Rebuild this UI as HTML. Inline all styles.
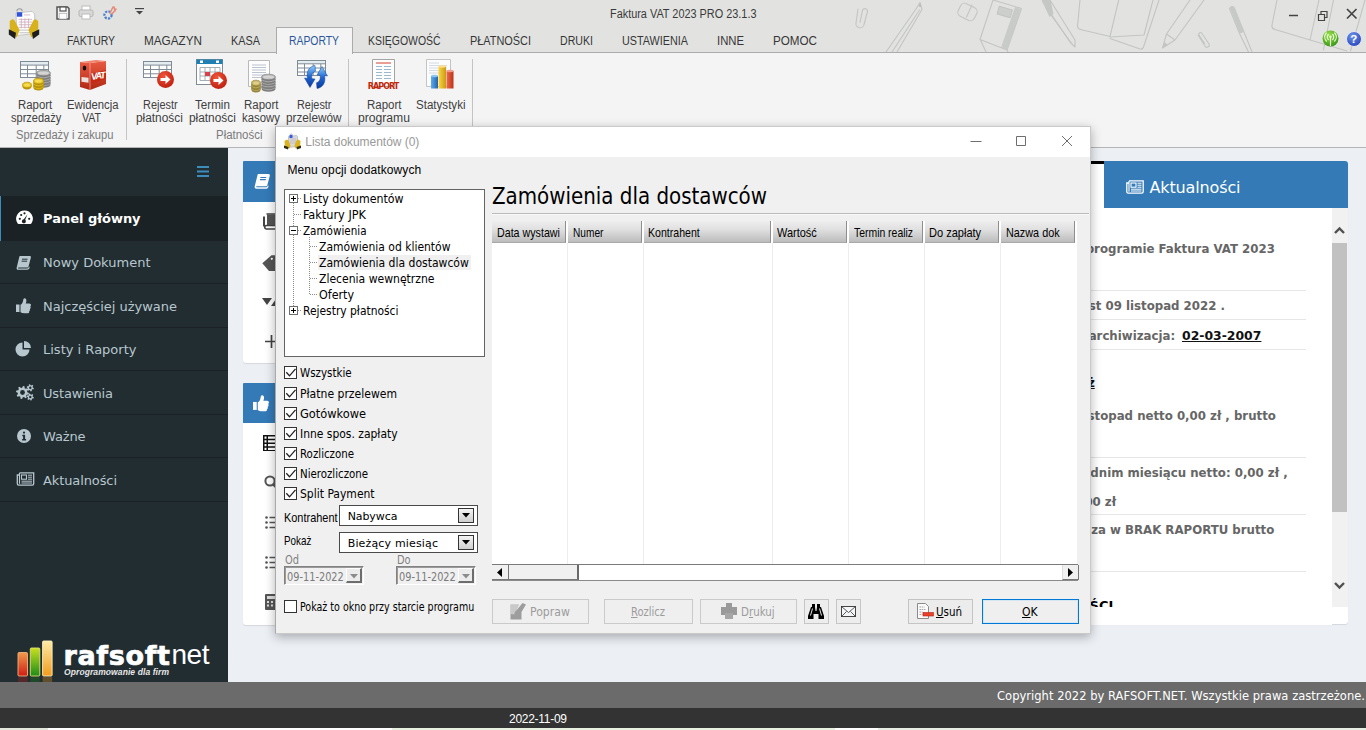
<!DOCTYPE html>
<html lang="pl">
<head>
<meta charset="utf-8">
<title>Faktura VAT 2023 PRO 23.1.3</title>
<style>
html,body{margin:0;padding:0}
body{width:1366px;height:730px;position:relative;overflow:hidden;background:#ecf0f5;font-family:"Liberation Sans",sans-serif}
div,svg{box-sizing:border-box}
svg{position:absolute;overflow:visible}
#titlebar{position:absolute;left:0;top:0;width:1366px;height:53px;background:#e2e3e1;border-bottom:1px solid #ababab;overflow:hidden}
#ribbon{position:absolute;left:0;top:53px;width:1366px;height:95px;background:#f4f4f5;border-bottom:1px solid #b5b5b5}
#sidebar{position:absolute;left:0;top:148px;width:228px;height:534px;background:#222d32;overflow:hidden}
#content{position:absolute;left:228px;top:148px;width:1138px;height:534px;background:#ecf0f5;overflow:hidden}
#footer{position:absolute;left:0;top:682px;width:1366px;height:26px;background:#6b6b6b}
#status{position:absolute;left:0;top:708px;width:1366px;height:19.5px;background:#333}
#strip{position:absolute;left:0;top:727.5px;width:1366px;height:3px;background:linear-gradient(90deg,#e3e6da 48px,#fff 48px,#fff 392px,#e8f0e0 392px,#e8f0e0 835px,#fff 835px,#fff 878px,#e8eee4 878px)}
#dialog{position:absolute;left:275px;top:126px;width:816px;height:508px;background:#f0f0f0;border:1px solid #c9c9c9;border-left-color:#a9a9a9;box-shadow:0 3px 10px rgba(0,0,0,.3)}
</style>
</head>
<body>
<div id="titlebar">
<svg style="left:0px;top:0px;" width="1366" height="52" viewBox="0 0 1366 52"><g fill="none" stroke="#c3c5c3" stroke-width="1.100" stroke-linecap="round" stroke-linejoin="round">
<path d="M858 9l-2 14a4 4 0 0 0 8 1.500l3.500-13a2.600 2.600 0 0 0-5-1.200l-2.500 12"/>
<path d="M916 9L886 52M919.500 10L892 52M922 9.500L897 52M916 9l4-6.500 2 7"/>
<rect x="958.500" y="5" width="18" height="14" rx="4.500" transform="rotate(27 967.500 12)"/><path d="M972 5l-5.500 12"/>
<path d="M993 0l28.500 8.500L1007 50l-27-10.500zM980.500 40l5.500 12M1007 50l1 2"/>
<rect x="998" y="8" width="13.500" height="8" transform="rotate(16 1005 12)" fill="#cdcfcd"/>
<path d="M1043 2l27 40 5 5 0-7L1050 0"/><path d="M1046 8l26 36"/>
<path d="M1080 0l-2.500 26c0 2 1 3 3 3.500l29.500 7M1118.700 0L1110 36.500M1110 37l34-2 9-35M1110 38.500l30 10.500c2 .5 3-.5 3.500-2L1159 0"/>
<path d="M1190 0l-23.500 34-4 14 12.500-8L1204 0M1166.500 34l8.500 6"/>
<path d="M1198 35l7 11a2 2 0 0 0 4-2l-7-10.500a1.500 1.500 0 0 0-3 1.500l5.500 8.500"/>
<path d="M1229.500 8.500c1-2 3.500-2.500 4.500-.5l10 24 8 20M1229.500 8.500l10 25 9 18.500"/>
<path d="M1277 0l-5 25c-.5 2.500 1 4 3 4.500L1347 51M1319 0l-9 40M1333.500 0L1323.500 50M1365 0l-14.500 51"/>
</g>
<path d="M1015 7l6 2-14 41-6-2.500z" fill="#c9cbc9"/><path d="M1041.500 0h9l3 14-4 3z" fill="#c5c7c5"/><path d="M1230 8c1-2.500 4-2.500 5 0l9 24-4 1.500z" fill="#c7c9c7"/><path d="M920 3l1.300 4-2.800-.5z" fill="#bbb"/><path d="M1162.500 48l2-6 3.500 3z" fill="#c3c5c3"/></svg>
<div style="position:absolute;left:609.5px;top:6.15px;font:normal 12px 'Liberation Sans',sans-serif;line-height:16px;color:#3a3a3a;white-space:pre;transform:scaleX(0.9076);transform-origin:0 50%;">Faktura VAT 2023 PRO 23.1.3</div>
<div style="position:absolute;left:67.0px;top:32.85px;font:normal 12px 'Liberation Sans',sans-serif;line-height:16px;color:#363636;white-space:pre;transform:scaleX(0.8707);transform-origin:0 50%;">FAKTURY</div>
<div style="position:absolute;left:144.0px;top:32.85px;font:normal 12px 'Liberation Sans',sans-serif;line-height:16px;color:#363636;white-space:pre;transform:scaleX(0.9774);transform-origin:0 50%;">MAGAZYN</div>
<div style="position:absolute;left:231.0px;top:32.85px;font:normal 12px 'Liberation Sans',sans-serif;line-height:16px;color:#363636;white-space:pre;transform:scaleX(0.9058);transform-origin:0 50%;">KASA</div>
<div style="position:absolute;left:368.0px;top:32.85px;font:normal 12px 'Liberation Sans',sans-serif;line-height:16px;color:#363636;white-space:pre;transform:scaleX(0.8699);transform-origin:0 50%;">KSIĘGOWOŚĆ</div>
<div style="position:absolute;left:470.0px;top:32.85px;font:normal 12px 'Liberation Sans',sans-serif;line-height:16px;color:#363636;white-space:pre;transform:scaleX(0.9088);transform-origin:0 50%;">PŁATNOŚCI</div>
<div style="position:absolute;left:560.0px;top:32.85px;font:normal 12px 'Liberation Sans',sans-serif;line-height:16px;color:#363636;white-space:pre;transform:scaleX(0.8837);transform-origin:0 50%;">DRUKI</div>
<div style="position:absolute;left:622.0px;top:32.85px;font:normal 12px 'Liberation Sans',sans-serif;line-height:16px;color:#363636;white-space:pre;transform:scaleX(0.8999);transform-origin:0 50%;">USTAWIENIA</div>
<div style="position:absolute;left:717.0px;top:32.85px;font:normal 12px 'Liberation Sans',sans-serif;line-height:16px;color:#363636;white-space:pre;transform:scaleX(0.9417);transform-origin:0 50%;">INNE</div>
<div style="position:absolute;left:773.0px;top:32.85px;font:normal 12px 'Liberation Sans',sans-serif;line-height:16px;color:#363636;white-space:pre;transform:scaleX(0.9704);transform-origin:0 50%;">POMOC</div>
<svg style="left:56px;top:6px;" width="14" height="14" viewBox="0 0 14 14"><path d="M1 1h10.500l1.500 1.500V13H1z" fill="#f2f2f2" stroke="#555" stroke-width="1.500"/><rect x="4" y="1" width="6" height="4" fill="#fff" stroke="#555" stroke-width="1.200"/><rect x="3.200" y="7.500" width="7.600" height="5.500" fill="#fdfdfd" stroke="#aaa" stroke-width=".6"/></svg>
<svg style="left:78px;top:5px;" width="16" height="15" viewBox="0 0 16 15"><rect x="4" y="1" width="8" height="5" fill="#fff" stroke="#bbb"/><rect x="1" y="5" width="14" height="6.500" rx="1.500" fill="#d9d9d9" stroke="#b5b5b5"/><rect x="4" y="9" width="8" height="5" fill="#fff" stroke="#bbb"/></svg>
<svg style="left:102px;top:4px;" width="16" height="17" viewBox="0 0 16 17"><circle cx="6" cy="11" r="3.600" fill="none" stroke="#4a7fd0" stroke-width="2.200" stroke-dasharray="2.200 1.200"/><path d="M8 9l3-6M10 10l4-5M12 3l1 4" stroke="#e88a7a" stroke-width="1.600" stroke-linecap="round"/></svg>
<svg style="left:135px;top:8px;" width="9" height="7" viewBox="0 0 9 7"><path d="M0 .6h9" stroke="#444" stroke-width="1.200"/><path d="M1 3h7L4.500 6.500z" fill="#444"/></svg>
<svg style="left:7.5px;top:6px;" width="32" height="33" viewBox="0 0 34 37"><path d="M9 6a3 3 0 0 1 6 0" fill="none" stroke="#9a9a9a" stroke-width="1.200"/>
<path d="M8 8l18-2 3 3v22l-20 2z" fill="#fdfdfd" stroke="#b5b5b5" stroke-width=".8"/>
<rect x="9" y="7" width="6" height="5" fill="#2f54d9"/>
<path d="M17 10h7M11 15h15M11 18h15M11 21h15M11 24h15M14 14v11M18 14v11M22 14v11" stroke="#c9a2b6" stroke-width=".8"/>
<path d="M11 27h14M12 30h12" stroke="#bbb" stroke-width="1"/>
<path d="M1 17c2-3 5-3 6 0l5 10-3 8-7-3-1-8z" fill="#d8b21c"/><path d="M33 17c-2-3-5-3-6 0l-5 10 3 8 7-3 1-8z" fill="#d8b21c"/>
<path d="M0 26l8 4-1 7-7-5z" fill="#1e1e1e"/><path d="M34 26l-8 4 1 7 7-5z" fill="#1e1e1e"/></svg>
<svg style="left:1288px;top:10px;" width="70" height="12" viewBox="0 0 70 12"><g stroke="#444" stroke-width="1.500" fill="none"><path d="M1 5.500h9"/><path d="M30.500 4.500h6v6h-6zM33 4V1.500h6v6h-2.500" stroke-width="1.200"/><path d="M59 -1l9.500 9.500M68.500 -1L59 8.500" stroke-width="1.700"/></g></svg>
<svg style="left:1322px;top:30px;" width="17" height="17" viewBox="0 0 17 17"><defs><radialGradient id="gg" cx=".4" cy=".3" r=".8"><stop offset="0" stop-color="#9be04a"/><stop offset="1" stop-color="#2f8f12"/></radialGradient></defs><circle cx="8.500" cy="8.500" r="8" fill="url(#gg)"/><path d="M8.500 7v8.500M6.300 4.500a3.500 3.500 0 0 0 0 5M10.700 4.500a3.500 3.500 0 0 1 0 5M4.300 3a6 6 0 0 0 0 8M12.700 3a6 6 0 0 1 0 8" stroke="#eaffd8" stroke-width="1.200" fill="none" stroke-linecap="round"/><circle cx="8.500" cy="6.800" r="1.200" fill="#eaffd8"/></svg>
<svg style="left:1346px;top:31px;" width="16" height="16" viewBox="0 0 16 16"><defs><radialGradient id="bg" cx=".4" cy=".3" r=".8"><stop offset="0" stop-color="#6f93ea"/><stop offset="1" stop-color="#1f3fb5"/></radialGradient></defs><circle cx="8" cy="8" r="7.500" fill="url(#bg)" stroke="#e4e9f8" stroke-width="1"/></svg>
<div style="position:absolute;left:1350.3px;top:31.02px;font:bold 11.5px 'Liberation Sans',sans-serif;line-height:16px;color:#fff;white-space:pre;">?</div>
</div>
<div id="ribbon">
<div style="position:absolute;left:276px;top:-26px;width:77px;height:27px;background:#f4f4f5;border:1px solid #ababab;border-bottom:none"></div>
<div style="position:absolute;left:289.0px;top:-20.15px;font:normal 12px 'Liberation Sans',sans-serif;line-height:16px;color:#2b579a;white-space:pre;transform:scaleX(0.8651);transform-origin:0 50%;">RAPORTY</div>
<div style="position:absolute;left:18.4px;top:43.85px;font:normal 12px 'Liberation Sans',sans-serif;line-height:16px;color:#404040;white-space:pre;transform:scaleX(0.9492);transform-origin:0 50%;">Raport</div>
<div style="position:absolute;left:10.5px;top:56.85px;font:normal 12px 'Liberation Sans',sans-serif;line-height:16px;color:#404040;white-space:pre;transform:scaleX(0.9177);transform-origin:0 50%;">sprzedaży</div>
<div style="position:absolute;left:66.8px;top:43.85px;font:normal 12px 'Liberation Sans',sans-serif;line-height:16px;color:#404040;white-space:pre;transform:scaleX(0.9414);transform-origin:0 50%;">Ewidencja</div>
<div style="position:absolute;left:82.1px;top:56.85px;font:normal 12px 'Liberation Sans',sans-serif;line-height:16px;color:#404040;white-space:pre;transform:scaleX(0.8858);transform-origin:0 50%;">VAT</div>
<div style="position:absolute;left:142.5px;top:43.85px;font:normal 12px 'Liberation Sans',sans-serif;line-height:16px;color:#404040;white-space:pre;transform:scaleX(0.9102);transform-origin:0 50%;">Rejestr</div>
<div style="position:absolute;left:135.9px;top:56.85px;font:normal 12px 'Liberation Sans',sans-serif;line-height:16px;color:#404040;white-space:pre;transform:scaleX(0.9879);transform-origin:0 50%;">płatności</div>
<div style="position:absolute;left:194.8px;top:43.85px;font:normal 12px 'Liberation Sans',sans-serif;line-height:16px;color:#404040;white-space:pre;transform:scaleX(0.9690);transform-origin:0 50%;">Termin</div>
<div style="position:absolute;left:188.6px;top:56.85px;font:normal 12px 'Liberation Sans',sans-serif;line-height:16px;color:#404040;white-space:pre;transform:scaleX(0.9879);transform-origin:0 50%;">płatności</div>
<div style="position:absolute;left:243.7px;top:43.85px;font:normal 12px 'Liberation Sans',sans-serif;line-height:16px;color:#404040;white-space:pre;transform:scaleX(0.9575);transform-origin:0 50%;">Raport</div>
<div style="position:absolute;left:241.6px;top:56.85px;font:normal 12px 'Liberation Sans',sans-serif;line-height:16px;color:#404040;white-space:pre;transform:scaleX(0.9471);transform-origin:0 50%;">kasowy</div>
<div style="position:absolute;left:296.5px;top:43.85px;font:normal 12px 'Liberation Sans',sans-serif;line-height:16px;color:#404040;white-space:pre;transform:scaleX(0.9075);transform-origin:0 50%;">Rejestr</div>
<div style="position:absolute;left:285.5px;top:56.85px;font:normal 12px 'Liberation Sans',sans-serif;line-height:16px;color:#404040;white-space:pre;transform:scaleX(0.9788);transform-origin:0 50%;">przelewów</div>
<div style="position:absolute;left:366.5px;top:43.85px;font:normal 12px 'Liberation Sans',sans-serif;line-height:16px;color:#404040;white-space:pre;transform:scaleX(0.9575);transform-origin:0 50%;">Raport</div>
<div style="position:absolute;left:358.0px;top:56.85px;font:normal 12px 'Liberation Sans',sans-serif;line-height:16px;color:#404040;white-space:pre;transform:scaleX(1.0125);transform-origin:0 50%;">programu</div>
<div style="position:absolute;left:415.5px;top:43.85px;font:normal 12px 'Liberation Sans',sans-serif;line-height:16px;color:#404040;white-space:pre;transform:scaleX(0.9638);transform-origin:0 50%;">Statystyki</div>
<div style="position:absolute;left:15.5px;top:73.85px;font:normal 12px 'Liberation Sans',sans-serif;line-height:16px;color:#7a7a7a;white-space:pre;transform:scaleX(0.9309);transform-origin:0 50%;">Sprzedaży i zakupu</div>
<div style="position:absolute;left:215.9px;top:73.85px;font:normal 12px 'Liberation Sans',sans-serif;line-height:16px;color:#7a7a7a;white-space:pre;transform:scaleX(0.9548);transform-origin:0 50%;">Płatności</div>
<div style="position:absolute;left:126px;top:6px;width:1px;height:81px;background:#c4c4c4"></div>
<div style="position:absolute;left:348px;top:6px;width:1px;height:81px;background:#c4c4c4"></div>
<div style="position:absolute;left:472px;top:6px;width:1px;height:81px;background:#c4c4c4"></div>
<svg style="left:20px;top:7.5px;" width="29" height="17" viewBox="0 0 29 17"><rect x=".5" y=".5" width="28" height="16" fill="#fff" stroke="#7f8c95"/><rect x="1" y="1" width="27" height="3.1" fill="#e4ecf0"/><path d="M0 4.1h29" stroke="#7f8c95" stroke-width="1"/><path d="M0 8.5h29" stroke="#7f8c95" stroke-width="1"/><path d="M0 12.8h29" stroke="#7f8c95" stroke-width="1"/><path d="M7.5 4.1v12.9" stroke="#7f8c95" stroke-width="1"/><path d="M16.2 4.1v12.9" stroke="#7f8c95" stroke-width="1"/><path d="M23.8 4.1v12.9" stroke="#7f8c95" stroke-width="1"/></svg>
<svg style="left:35.5px;top:17px;" width="15" height="19.0" viewBox="0 0 15 19.0"><ellipse cx="7.5" cy="15.0" rx="7" ry="2.800" fill="#7e7e7e"/><ellipse cx="7.5" cy="13.4" rx="7" ry="2.800" fill="#b9b9b9" stroke="#7e7e7e" stroke-width=".7"/><ellipse cx="7.5" cy="12.4" rx="7" ry="2.800" fill="#7e7e7e"/><ellipse cx="7.5" cy="10.8" rx="7" ry="2.800" fill="#b9b9b9" stroke="#7e7e7e" stroke-width=".7"/><ellipse cx="7.5" cy="9.8" rx="7" ry="2.800" fill="#7e7e7e"/><ellipse cx="7.5" cy="8.2" rx="7" ry="2.800" fill="#b9b9b9" stroke="#7e7e7e" stroke-width=".7"/><ellipse cx="7.5" cy="7.2" rx="7" ry="2.800" fill="#7e7e7e"/><ellipse cx="7.5" cy="5.6" rx="7" ry="2.800" fill="#b9b9b9" stroke="#7e7e7e" stroke-width=".7"/><ellipse cx="7.5" cy="4.6" rx="7" ry="2.800" fill="#7e7e7e"/><ellipse cx="7.5" cy="3.0" rx="7" ry="2.800" fill="#b9b9b9" stroke="#7e7e7e" stroke-width=".7"/><ellipse cx="7.5" cy="3" rx="5.5" ry="1.600" fill="#d4d4d4"/></svg>
<svg style="left:33px;top:24.5px;" width="11" height="13.8" viewBox="0 0 11 13.8"><ellipse cx="5.5" cy="9.8" rx="5" ry="2.800" fill="#b8930c"/><ellipse cx="5.5" cy="8.2" rx="5" ry="2.800" fill="#e9c51f" stroke="#b8930c" stroke-width=".7"/><ellipse cx="5.5" cy="7.2" rx="5" ry="2.800" fill="#b8930c"/><ellipse cx="5.5" cy="5.6" rx="5" ry="2.800" fill="#e9c51f" stroke="#b8930c" stroke-width=".7"/><ellipse cx="5.5" cy="4.6" rx="5" ry="2.800" fill="#b8930c"/><ellipse cx="5.5" cy="3.0" rx="5" ry="2.800" fill="#e9c51f" stroke="#b8930c" stroke-width=".7"/><ellipse cx="5.5" cy="3" rx="3.5" ry="1.600" fill="#f6dc55"/></svg>
<svg style="left:21.5px;top:29px;" width="10.0" height="8.6" viewBox="0 0 10.0 8.6"><ellipse cx="5.0" cy="4.6" rx="4.5" ry="2.800" fill="#b8930c"/><ellipse cx="5.0" cy="3.0" rx="4.5" ry="2.800" fill="#e9c51f" stroke="#b8930c" stroke-width=".7"/><ellipse cx="5.0" cy="3" rx="3.0" ry="1.600" fill="#f6dc55"/></svg>
<svg style="left:79px;top:7px;" width="30" height="31" viewBox="0 0 30 31"><defs><linearGradient id="bd" x1="0" y1="0" x2="0" y2="1"><stop offset="0" stop-color="#ea5a42"/><stop offset="1" stop-color="#b02812"/></linearGradient></defs><path d="M1 2l10 1v27L1 27z" fill="url(#bd)"/><path d="M11 3l16-2v23l-16 6z" fill="url(#bd)"/><path d="M11 14l16-4v9l-16 5z" fill="#c42a14"/><path d="M1 2L17 0l10 1-16 2z" fill="#f0826e"/>
<ellipse cx="5.500" cy="8" rx="1.800" ry="2.500" fill="#111"/><path d="M2.500 17l7 .8v5l-7-1z" fill="#e8e0dc"/><path d="M11 3v27" stroke="#f7b3a6" stroke-width=".7"/></svg>
<div style="position:absolute;left:90.5px;top:14.71px;font:bold 9.5px 'Liberation Sans',sans-serif;line-height:16px;color:#fff;white-space:pre;letter-spacing:-1.297px;transform:rotate(-8deg);font-style:italic;">VAT</div>
<svg style="left:143px;top:8px;" width="29" height="17" viewBox="0 0 29 17"><rect x=".5" y=".5" width="28" height="16" fill="#fff" stroke="#7f8c95"/><rect x="1" y="1" width="27" height="3.1" fill="#e4ecf0"/><path d="M0 4.1h29" stroke="#7f8c95" stroke-width="1"/><path d="M0 8.5h29" stroke="#7f8c95" stroke-width="1"/><path d="M0 12.8h29" stroke="#7f8c95" stroke-width="1"/><path d="M7.5 4.1v12.9" stroke="#7f8c95" stroke-width="1"/><path d="M16.2 4.1v12.9" stroke="#7f8c95" stroke-width="1"/><path d="M23.8 4.1v12.9" stroke="#7f8c95" stroke-width="1"/></svg>
<svg style="left:156.5px;top:18.0px;" width="17.0" height="17.0" viewBox="0 0 17.0 17.0"><defs><radialGradient id="ra165" cx=".4" cy=".3" r=".8"><stop offset="0" stop-color="#f0543a"/><stop offset="1" stop-color="#b81a0a"/></radialGradient></defs><circle cx="8.5" cy="8.5" r="8.5" fill="url(#ra165)"/><path d="M3.5 7.1h5v-3l5 4.400-5 4.400v-3h-5z" fill="#fff"/></svg>
<svg style="left:196px;top:6px;" width="27" height="26" viewBox="0 0 27 26"><rect x=".5" y=".5" width="26" height="25" fill="#fff" stroke="#7f8c95"/><rect x=".5" y=".5" width="26" height="4.500" fill="#1e7fb4"/>
<rect x="4" y="1.500" width="3" height="2.500" fill="#fff"/><rect x="20" y="1.500" width="3" height="2.500" fill="#fff"/>
<path d="M4 8.500h20v13H4zM4 13h20M4 17h20M9 8.500v13M14 8.500v13M19 8.500v13" fill="none" stroke="#9aa7b0" stroke-width=".9"/><rect x="9" y="13" width="5" height="4" fill="#d9404c"/></svg>
<svg style="left:209.5px;top:19.0px;" width="17.0" height="17.0" viewBox="0 0 17.0 17.0"><defs><radialGradient id="ra218" cx=".4" cy=".3" r=".8"><stop offset="0" stop-color="#f0543a"/><stop offset="1" stop-color="#b81a0a"/></radialGradient></defs><circle cx="8.5" cy="8.5" r="8.5" fill="url(#ra218)"/><path d="M3.5 7.1h5v-3l5 4.400-5 4.400v-3h-5z" fill="#fff"/></svg>
<svg style="left:248px;top:7px;" width="23" height="27" viewBox="0 0 23 27"><path d="M.5 .5h21v26H.5z" fill="#fdfdfd" stroke="#b9b9b9"/><path d="M4 5h14M4 7.500h14M4 10h14M4 12.500h14M4 15h14M4 17.500h14" stroke="#a9b4c2" stroke-width=".8"/></svg>
<svg style="left:260.5px;top:21px;" width="15" height="19.0" viewBox="0 0 15 19.0"><ellipse cx="7.5" cy="15.0" rx="7" ry="2.800" fill="#7e7e7e"/><ellipse cx="7.5" cy="13.4" rx="7" ry="2.800" fill="#b9b9b9" stroke="#7e7e7e" stroke-width=".7"/><ellipse cx="7.5" cy="12.4" rx="7" ry="2.800" fill="#7e7e7e"/><ellipse cx="7.5" cy="10.8" rx="7" ry="2.800" fill="#b9b9b9" stroke="#7e7e7e" stroke-width=".7"/><ellipse cx="7.5" cy="9.8" rx="7" ry="2.800" fill="#7e7e7e"/><ellipse cx="7.5" cy="8.2" rx="7" ry="2.800" fill="#b9b9b9" stroke="#7e7e7e" stroke-width=".7"/><ellipse cx="7.5" cy="7.2" rx="7" ry="2.800" fill="#7e7e7e"/><ellipse cx="7.5" cy="5.6" rx="7" ry="2.800" fill="#b9b9b9" stroke="#7e7e7e" stroke-width=".7"/><ellipse cx="7.5" cy="4.6" rx="7" ry="2.800" fill="#7e7e7e"/><ellipse cx="7.5" cy="3.0" rx="7" ry="2.800" fill="#b9b9b9" stroke="#7e7e7e" stroke-width=".7"/><ellipse cx="7.5" cy="3" rx="5.5" ry="1.600" fill="#d4d4d4"/></svg>
<svg style="left:251px;top:27px;" width="10.0" height="13.8" viewBox="0 0 10.0 13.8"><ellipse cx="5.0" cy="9.8" rx="4.5" ry="2.800" fill="#96853c"/><ellipse cx="5.0" cy="8.2" rx="4.5" ry="2.800" fill="#c9b565" stroke="#96853c" stroke-width=".7"/><ellipse cx="5.0" cy="7.2" rx="4.5" ry="2.800" fill="#96853c"/><ellipse cx="5.0" cy="5.6" rx="4.5" ry="2.800" fill="#c9b565" stroke="#96853c" stroke-width=".7"/><ellipse cx="5.0" cy="4.6" rx="4.5" ry="2.800" fill="#96853c"/><ellipse cx="5.0" cy="3.0" rx="4.5" ry="2.800" fill="#c9b565" stroke="#96853c" stroke-width=".7"/><ellipse cx="5.0" cy="3" rx="3.0" ry="1.600" fill="#ddcf8e"/></svg>
<svg style="left:297px;top:6.5px;" width="29" height="16" viewBox="0 0 29 16"><rect x=".5" y=".5" width="28" height="15" fill="#fff" stroke="#7f8c95"/><rect x="1" y="1" width="27" height="2.8" fill="#e4ecf0"/><path d="M0 3.8h29" stroke="#7f8c95" stroke-width="1"/><path d="M0 8.0h29" stroke="#7f8c95" stroke-width="1"/><path d="M0 12.0h29" stroke="#7f8c95" stroke-width="1"/><path d="M7.5 3.8v12.2" stroke="#7f8c95" stroke-width="1"/><path d="M16.2 3.8v12.2" stroke="#7f8c95" stroke-width="1"/><path d="M23.8 3.8v12.2" stroke="#7f8c95" stroke-width="1"/></svg>
<svg style="left:304px;top:11px;" width="24" height="25" viewBox="0 0 24 25"><defs><linearGradient id="bl" x1="0" y1="0" x2="0" y2="1"><stop offset="0" stop-color="#8fd0ff"/><stop offset=".5" stop-color="#1f66d0"/><stop offset="1" stop-color="#0a3a9a"/></linearGradient></defs>
<path d="M13 24.500c6-1 9-6 7.500-13l3 .5-5.500-9.500-5 8.500 3 .3c1 3.500-.5 6.500-3.500 7.500z" fill="url(#bl)" stroke="#123f96" stroke-width=".5"/>
<path d="M11 1.500c-6 1-9 6-7.500 13l-3-.5 5.500 9.500 5-8.500-3-.3c-1-3.500 .5-6.500 3.500-7.500z" fill="url(#bl)" stroke="#123f96" stroke-width=".5"/></svg>
<svg style="left:372px;top:6px;" width="23" height="28" viewBox="0 0 23 28"><path d="M.5 .5h22v27H.5z" fill="#fdfdfd" stroke="#a4a4a4"/><path d="M4 4h15" stroke="#d8402a" stroke-width="1"/><path d="M4 7.500h6M12 7.500h7M4 10.500h6M12 10.500h7M4 13.500h6M12 13.500h7M4 16.500h6M12 16.500h7M4 19.500h6M12 19.500h7" stroke="#8fb0c9" stroke-width=".9"/></svg>
<div style="position:absolute;left:367.8px;top:26.23px;font:bold 8px 'DejaVu Sans',sans-serif;line-height:16px;color:#c2280a;white-space:pre;letter-spacing:-0.956px;">RAPORT</div>
<svg style="left:426px;top:6px;" width="30" height="31" viewBox="0 0 30 31"><defs><linearGradient id="b1" x1="0" x2="1"><stop offset="0" stop-color="#5aaef0"/><stop offset="1" stop-color="#2a62a8"/></linearGradient><linearGradient id="b2" x1="0" x2="1"><stop offset="0" stop-color="#fbd648"/><stop offset="1" stop-color="#c99a10"/></linearGradient><linearGradient id="b3" x1="0" x2="1"><stop offset="0" stop-color="#f06a48"/><stop offset="1" stop-color="#b8341a"/></linearGradient></defs>
<path d="M.5 .5h24v27H.5z" fill="#fcfcfc" stroke="#bdbdbd" stroke-width=".9"/><path d="M3 4h10M3 6.500h18M3 9h18M3 11.500h18M3 14h18" stroke="#c9d2da" stroke-width=".8"/>
<rect x="5" y="17" width="7" height="12.500" fill="url(#b1)"/><rect x="12.500" y="7.500" width="7.500" height="22" fill="url(#b2)"/><rect x="20.500" y="12" width="7" height="17.500" fill="url(#b3)"/>
<ellipse cx="8.500" cy="17" rx="3.500" ry="1.200" fill="#8cc6f4"/><ellipse cx="16.200" cy="7.500" rx="3.700" ry="1.200" fill="#fbe08c"/><ellipse cx="24" cy="12" rx="3.500" ry="1.200" fill="#f59a8c"/></svg>
</div>
<div id="sidebar">
<svg style="left:197px;top:18px;" width="12" height="11" viewBox="0 0 12 11"><path d="M0 1h12M0 5.500h12M0 10h12" stroke="#3c8dbc" stroke-width="2"/></svg>
<div style="position:absolute;left:0px;top:48px;width:228px;height:45px;background:#1a2226;border-left:1px solid #3c8dbc"></div>
<div style="position:absolute;left:43.0px;top:63.30px;font:bold 13px 'DejaVu Sans',sans-serif;line-height:16px;color:#fff;white-space:pre;letter-spacing:-0.019px;">Panel główny</div>
<div style="position:absolute;left:43.0px;top:106.90px;font:normal 13px 'DejaVu Sans',sans-serif;line-height:16px;color:#b8c7ce;white-space:pre;letter-spacing:0.003px;">Nowy Dokument</div>
<div style="position:absolute;left:0px;top:135.0px;width:228px;height:1px;background:#1a2226"></div>
<div style="position:absolute;left:43.0px;top:150.60px;font:normal 13px 'DejaVu Sans',sans-serif;line-height:16px;color:#b8c7ce;white-space:pre;letter-spacing:-0.008px;">Najczęściej używane</div>
<div style="position:absolute;left:0px;top:178.7px;width:228px;height:1px;background:#1a2226"></div>
<div style="position:absolute;left:43.0px;top:194.30px;font:normal 13px 'DejaVu Sans',sans-serif;line-height:16px;color:#b8c7ce;white-space:pre;letter-spacing:0.010px;">Listy i Raporty</div>
<div style="position:absolute;left:0px;top:222.39999999999998px;width:228px;height:1px;background:#1a2226"></div>
<div style="position:absolute;left:43.0px;top:237.90px;font:normal 13px 'DejaVu Sans',sans-serif;line-height:16px;color:#b8c7ce;white-space:pre;letter-spacing:-0.158px;">Ustawienia</div>
<div style="position:absolute;left:0px;top:266.0px;width:228px;height:1px;background:#1a2226"></div>
<div style="position:absolute;left:43.0px;top:281.10px;font:normal 13px 'DejaVu Sans',sans-serif;line-height:16px;color:#b8c7ce;white-space:pre;letter-spacing:-0.141px;">Ważne</div>
<div style="position:absolute;left:0px;top:309.2px;width:228px;height:1px;background:#1a2226"></div>
<div style="position:absolute;left:43.0px;top:325.30px;font:normal 13px 'DejaVu Sans',sans-serif;line-height:16px;color:#b8c7ce;white-space:pre;letter-spacing:-0.106px;">Aktualności</div>
<div style="position:absolute;left:0px;top:353.4px;width:228px;height:1px;background:#1a2226"></div>
<svg style="left:16px;top:62px;" width="17" height="15" viewBox="0 0 17 15"><path d="M8.500 .5a8.300 8.300 0 0 1 7 12.800c-.3.500-.7.700-1.200.7H2.700c-.5 0-.9-.2-1.200-.7A8.300 8.300 0 0 1 8.500.5z" fill="#fff"/><circle cx="3.800" cy="8.800" r="1.100" fill="#1a2226"/><circle cx="5.200" cy="5" r="1.100" fill="#1a2226"/><circle cx="8.500" cy="3.300" r="1.100" fill="#1a2226"/><circle cx="13.200" cy="8.800" r="1.100" fill="#1a2226"/><path d="M11.500 4.200l-2.300 5.600a2 2 0 1 1-1.400-.5z" fill="#1a2226"/></svg>
<svg style="left:16px;top:106.5px;" width="16" height="15" viewBox="0 0 16 15"><path d="M4.200 1h9.600c.9 0 1.300.7 1.100 1.500l-2.300 8.700c-.2.800-.8 1.300-1.600 1.300H2.500c-.6 0-.8.900 0 .9h8.700c.8 0 1.300-.5 1.600-1.300l.2-.6c.7.300.7 1 .5 1.600-.4 1.100-1.200 1.700-2.300 1.700H2.300C.9 14.800.3 13.600.7 12.400L3.200 2.300C3.400 1.500 3.700 1 4.200 1z" fill="#b8c7ce"/><path d="M6 4.200h5.500M5.600 6.200h5.500" stroke="#222d32" stroke-width="1"/></svg>
<svg style="left:16px;top:150px;" width="16" height="15" viewBox="0 0 16 15"><path d="M0 6.500h3.500v7.500H0z" fill="#b8c7ce"/><path d="M4.500 6.800c1.300-.6 2.300-2.300 2.600-4.100C7.300 1.500 7.600.3 8.500.3c1.300 0 1.900 1.200 1.900 2.400 0 1.100-.4 2-.7 2.700h3.600c1 0 1.700.8 1.700 1.700 0 .6-.3 1.100-.7 1.400.3.300.4.700.4 1.100 0 .7-.4 1.200-.9 1.500.1.200.2.500.2.800 0 .6-.4 1.200-.9 1.400.1.200.1.400.1.600 0 .9-.8 1.400-1.700 1.400H8.200c-1.300 0-2.500-.6-3.700-1z" fill="#b8c7ce"/></svg>
<svg style="left:16px;top:193px;" width="15" height="15" viewBox="0 0 15 15"><path d="M6.500 1.500v7h7A7 7 0 1 1 6.500 1.500z" fill="#b8c7ce"/><path d="M8 0a7 7 0 0 1 7 7H8z" fill="#b8c7ce"/></svg>
<svg style="left:16px;top:235.5px;" width="18" height="17" viewBox="0 0 18 17"><path d="M12.98 8.96L12.67 10.56L10.79 10.65L10.13 11.65L10.76 13.41L9.41 14.31L8.02 13.05L6.84 13.29L6.04 14.98L4.44 14.67L4.35 12.79L3.35 12.13L1.59 12.76L0.69 11.41L1.95 10.02L1.71 8.84L0.02 8.04L0.33 6.44L2.21 6.35L2.87 5.35L2.24 3.59L3.59 2.69L4.98 3.95L6.16 3.71L6.96 2.02L8.56 2.33L8.65 4.21L9.65 4.87L11.41 4.24L12.31 5.59L11.05 6.98L11.29 8.16z" fill="#b8c7ce"/><circle cx="6.5" cy="8.5" r="2.4" fill="#222d32"/><path d="M17.88 4.14L17.57 5.30L16.34 5.25L15.75 5.84L15.80 7.07L14.64 7.38L14.06 6.29L13.26 6.07L12.21 6.73L11.37 5.89L12.03 4.84L11.81 4.04L10.72 3.46L11.03 2.30L12.26 2.35L12.85 1.76L12.80 0.53L13.96 0.22L14.54 1.31L15.34 1.53L16.39 0.87L17.23 1.71L16.57 2.76L16.79 3.56z" fill="#b8c7ce"/><circle cx="14.3" cy="3.8" r="1.2" fill="#222d32"/><path d="M17.88 13.34L17.57 14.50L16.34 14.45L15.75 15.04L15.80 16.27L14.64 16.58L14.06 15.49L13.26 15.27L12.21 15.93L11.37 15.09L12.03 14.04L11.81 13.24L10.72 12.66L11.03 11.50L12.26 11.55L12.85 10.96L12.80 9.73L13.96 9.42L14.54 10.51L15.34 10.73L16.39 10.07L17.23 10.91L16.57 11.96L16.79 12.76z" fill="#b8c7ce"/><circle cx="14.3" cy="13" r="1.2" fill="#222d32"/></svg>
<svg style="left:17px;top:281px;" width="14" height="14" viewBox="0 0 14 14"><circle cx="7" cy="7" r="7" fill="#b8c7ce"/><path d="M5.300 5.800h2.800v4.200h1v1.400H5.100V10h1V7.200h-.8z" fill="#222d32"/><circle cx="7" cy="3.600" r="1.100" fill="#222d32"/></svg>
<svg style="left:16px;top:324px;" width="19" height="14" viewBox="0 0 18 14"><path d="M3 .8h14.200v11c0 .8-.6 1.400-1.400 1.400H2.200C1.400 13.200.8 12.600.8 11.800V3h2.200" fill="none" stroke="#b8c7ce" stroke-width="1.300"/><path d="M3 1v10.800" stroke="#b8c7ce" stroke-width="1.100"/><rect x="5" y="3" width="5" height="4.200" fill="none" stroke="#b8c7ce" stroke-width="1.100"/><path d="M11.500 3.200h4M11.500 5.200h4M11.500 7.200h4M5 9.200h10.500M5 11h10.500" stroke="#b8c7ce" stroke-width="1"/></svg>
<svg style="left:17px;top:491px;" width="38" height="44" viewBox="0 0 38 44"><defs><linearGradient id="l1" x1="0" y1="0" x2="0" y2="1"><stop offset="0" stop-color="#f09a4a"/><stop offset="1" stop-color="#cf1c16"/></linearGradient><linearGradient id="l2" x1="0" y1="0" x2="0" y2="1"><stop offset="0" stop-color="#c8e020"/><stop offset="1" stop-color="#1c8c1a"/></linearGradient><linearGradient id="l3" x1="0" y1="0" x2="0" y2="1"><stop offset="0" stop-color="#fdeaa8"/><stop offset="1" stop-color="#f39c1c"/></linearGradient></defs>
<rect x="1" y="13.500" width="9.500" height="23.500" rx="1" fill="url(#l1)" stroke="#f3b27c" stroke-width=".9"/><rect x="13.300" y="9" width="9.500" height="28" rx="1" fill="url(#l2)" stroke="#e6e070" stroke-width=".9"/><rect x="25.600" y="2" width="9.500" height="35" rx="1" fill="url(#l3)" stroke="#fff0c0" stroke-width=".9"/>
<g opacity=".3"><rect x="1" y="38" width="9.500" height="5" fill="#cf1c16"/><rect x="13.300" y="38" width="9.500" height="5" fill="#1c8c1a"/><rect x="25.600" y="38" width="9.500" height="5" fill="#f39c1c"/></g></svg>
<div style="position:absolute;left:63.5px;top:499.76px;font:bold 27px 'DejaVu Sans',sans-serif;line-height:16px;color:#fff;white-space:pre;letter-spacing:0.656px;-webkit-text-stroke:.7px #fff;">rafsoft</div>
<div style="position:absolute;left:171.5px;top:498.61px;font:normal 28px 'Liberation Sans',sans-serif;line-height:16px;color:#fff;white-space:pre;letter-spacing:-0.469px;">net</div>
<div style="position:absolute;left:64.0px;top:516.36px;font:bold 8.5px 'Liberation Sans',sans-serif;line-height:16px;color:#e8e8e8;white-space:pre;letter-spacing:0.092px;font-style:italic;">Oprogramowanie dla firm</div>
</div>
<div id="footer">
<div style="position:absolute;left:997.0px;top:6.02px;font:normal 11.5px 'DejaVu Sans',sans-serif;line-height:16px;color:#fff;white-space:pre;letter-spacing:0.030px;">Copyright 2022 by RAFSOFT.NET. Wszystkie prawa zastrzeżone.</div>
</div>
<div id="status">
<div style="position:absolute;left:509.0px;top:2.85px;font:normal 12px 'Liberation Sans',sans-serif;line-height:16px;color:#fff;white-space:pre;letter-spacing:-0.278px;">2022-11-09</div>
</div>
<div id="strip"></div>
<div id="content">
<div style="position:absolute;left:15px;top:13px;width:440px;height:202px;background:#fff;border-radius:3px;box-shadow:0 1px 1px rgba(0,0,0,.1)"></div>
<div style="position:absolute;left:15px;top:13px;width:440px;height:41px;background:#337ab7;border-radius:1px 1px 0 0"></div>
<svg style="left:25.5px;top:25px;" width="17" height="16" viewBox="0 0 16 15"><path d="M4.200 1h9.600c.9 0 1.300.7 1.100 1.500l-2.300 8.700c-.2.800-.8 1.300-1.600 1.300H2.500c-.6 0-.8.900 0 .9h8.700c.8 0 1.300-.5 1.600-1.300l.2-.6c.7.300.7 1 .5 1.600-.4 1.100-1.200 1.700-2.300 1.700H2.300C.9 14.800.3 13.600.7 12.400L3.200 2.300C3.400 1.500 3.700 1 4.200 1z" fill="#fff"/><path d="M6 4.200h5.500M5.600 6.200h5.500" stroke="#337ab7" stroke-width="1"/></svg>
<svg style="left:35px;top:66px;" width="18" height="15" viewBox="0 0 18 15"><path d="M3.500 0H18v11.500H3.500A1.700 1.700 0 0 0 3.500 15H18" fill="none" stroke="#444" stroke-width="1.600"/><path d="M4 .5h14v10.500H4z" fill="#555"/><path d="M1 2.500v10" stroke="#444" stroke-width="2"/></svg>
<svg style="left:34px;top:106.5px;" width="18" height="16" viewBox="0 0 18 16"><path d="M.3 8.300L9.500 .3H18V16H7z" fill="#555"/><circle cx="9.800" cy="3.800" r="1.100" fill="#fff"/></svg>
<svg style="left:34px;top:150px;" width="18" height="8" viewBox="0 0 18 8"><path d="M0 0h10L5 7z" fill="#444"/><path d="M9 8l5-7 5 7z" fill="#444"/></svg>
<svg style="left:36.5px;top:187px;" width="13" height="13" viewBox="0 0 13 13"><path d="M6.500 0v13M0 6.500h13" stroke="#444" stroke-width="1.700"/></svg>
<div style="position:absolute;left:15px;top:235px;width:440px;height:242px;background:#fff;border-radius:3px;box-shadow:0 1px 1px rgba(0,0,0,.1)"></div>
<div style="position:absolute;left:15px;top:235px;width:440px;height:40px;background:#337ab7;border-radius:1px 1px 0 0"></div>
<svg style="left:25px;top:246.5px;" width="17" height="16" viewBox="0 0 16 15"><path d="M0 6.500h3.500v7.500H0z" fill="#fff"/><path d="M4.500 6.800c1.300-.6 2.300-2.300 2.600-4.100C7.300 1.500 7.600.3 8.500.3c1.300 0 1.900 1.200 1.900 2.400 0 1.100-.4 2-.7 2.700h3.600c1 0 1.700.8 1.700 1.700 0 .6-.3 1.100-.7 1.400.3.300.4.700.4 1.100 0 .7-.4 1.200-.9 1.500.1.200.2.500.2.800 0 .6-.4 1.200-.9 1.400.1.200.1.400.1.600 0 .9-.8 1.400-1.700 1.400H8.200c-1.300 0-2.500-.6-3.700-1z" fill="#fff"/></svg>
<svg style="left:35px;top:286.5px;" width="18" height="16" viewBox="0 0 18 16"><rect x="0" y="0" width="18" height="16" fill="#111"/><path d="M5 1.500h13v2.200H5zM5 5.300h13v2.200H5zM5 9.100h13v2.200H5zM5 12.800h13v2.200H5z" fill="#fff"/><path d="M1.500 1.500h2v2.200h-2zM1.500 5.300h2v2.200h-2zM1.500 9.100h2v2.200h-2zM1.500 12.800h2v2.200h-2z" fill="#fff"/></svg>
<svg style="left:36px;top:327px;" width="15" height="15" viewBox="0 0 15 15"><circle cx="6" cy="6" r="4.600" fill="none" stroke="#555" stroke-width="2"/><path d="M9.500 9.500l4.500 4.500" stroke="#555" stroke-width="2.600" stroke-linecap="round"/></svg>
<svg style="left:37px;top:367.5px;" width="16" height="13" viewBox="0 0 16 13"><circle cx="1.500" cy="1.500" r="1.300" fill="#555"/><circle cx="1.500" cy="6.500" r="1.300" fill="#555"/><circle cx="1.500" cy="11.500" r="1.300" fill="#555"/><path d="M4.500 1.500H16M4.500 6.500H16M4.500 11.500H16" stroke="#555" stroke-width="1.500"/></svg>
<svg style="left:37px;top:407.5px;" width="16" height="13" viewBox="0 0 16 13"><circle cx="1.500" cy="1.500" r="1.300" fill="#555"/><circle cx="1.500" cy="6.500" r="1.300" fill="#555"/><circle cx="1.500" cy="11.500" r="1.300" fill="#555"/><path d="M4.500 1.500H16M4.500 6.500H16M4.500 11.500H16" stroke="#555" stroke-width="1.500"/></svg>
<svg style="left:37px;top:446px;" width="14" height="16" viewBox="0 0 14 16"><rect x="0" y="0" width="14" height="16" rx="1" fill="#555"/><rect x="2" y="2" width="10" height="3" fill="#ddd"/><path d="M2 7h2v2H2zM6 7h2v2H6zM10 7h2v2h-2zM2 10.500h2v2H2zM6 10.500h2v2H6zM10 10.500h2v2h-2z" fill="#ddd"/></svg>
<div style="position:absolute;left:472px;top:13px;width:648px;height:463px;background:#fff;border-radius:3px;box-shadow:0 1px 1px rgba(0,0,0,.1)"></div>
<div style="position:absolute;left:472px;top:13px;width:404px;height:3px;background:#000"></div>
<div style="position:absolute;left:876px;top:13px;width:244px;height:47px;background:#337ab7;border-radius:0 3px 0 0"></div>
<svg style="left:897px;top:31.5px;" width="20" height="14" viewBox="0 0 18 14"><path d="M3 .8h14.200v11c0 .8-.6 1.400-1.400 1.400H2.200C1.400 13.200.8 12.600.8 11.800V3h2.200" fill="none" stroke="#fff" stroke-width="1.300"/><path d="M3 1v10.800" stroke="#fff" stroke-width="1.100"/><rect x="5" y="3" width="5" height="4.200" fill="none" stroke="#fff" stroke-width="1.100"/><path d="M11.500 3.200h4M11.500 5.200h4M11.500 7.200h4M5 9.200h10.500M5 11h10.500" stroke="#fff" stroke-width="1"/></svg>
<div style="position:absolute;left:921.5px;top:31.96px;font:normal 16px 'DejaVu Sans',sans-serif;line-height:16px;color:#fff;white-space:pre;letter-spacing:-0.139px;">Aktualności</div>
<div style="position:absolute;left:804.2px;top:92.70px;font:bold 13px 'DejaVu Sans',sans-serif;line-height:16px;color:#666;white-space:pre;transform:scaleX(0.9050);transform-origin:0 50%;">Witaj w programie Faktura VAT 2023</div>
<div style="position:absolute;left:801.1px;top:150.20px;font:bold 13px 'DejaVu Sans',sans-serif;line-height:16px;color:#666;white-space:pre;transform:scaleX(0.9050);transform-origin:0 50%;">Dzisiaj jest 09 listopad 2022 .</div>
<div style="position:absolute;left:799.5px;top:180.00px;font:bold 13px 'DejaVu Sans',sans-serif;line-height:16px;color:#666;white-space:pre;transform:scaleX(0.9050);transform-origin:0 50%;">Ostatnia archiwizacja:</div>
<div style="position:absolute;left:954.3px;top:180.00px;font:bold 13px 'DejaVu Sans',sans-serif;line-height:16px;color:#111;white-space:pre;transform:scaleX(0.9548);transform-origin:0 50%;text-decoration:underline;">02-03-2007</div>
<div style="position:absolute;left:806.3px;top:226.80px;font:bold 13px 'DejaVu Sans',sans-serif;line-height:16px;color:#111;white-space:pre;transform:scaleX(0.9050);transform-origin:0 50%;text-decoration:underline;">Sprzedaż</div>
<div style="position:absolute;left:709.1px;top:260.20px;font:bold 13px 'DejaVu Sans',sans-serif;line-height:16px;color:#666;white-space:pre;transform:scaleX(0.9050);transform-origin:0 50%;">Sprzedaż w miesiącu listopad netto 0,00 zł , brutto</div>
<div style="position:absolute;left:737.4px;top:317.10px;font:bold 13px 'DejaVu Sans',sans-serif;line-height:16px;color:#666;white-space:pre;transform:scaleX(0.9050);transform-origin:0 50%;">Sprzedaż w poprzednim miesiącu netto: 0,00 zł ,</div>
<div style="position:absolute;left:792.5px;top:345.50px;font:bold 13px 'DejaVu Sans',sans-serif;line-height:16px;color:#666;white-space:pre;transform:scaleX(0.9050);transform-origin:0 50%;">brutto: 0,00 zł</div>
<div style="position:absolute;left:748.7px;top:374.30px;font:bold 13px 'DejaVu Sans',sans-serif;line-height:16px;color:#666;white-space:pre;transform:scaleX(0.9050);transform-origin:0 50%;">Sprzedaż dzisiejsza w BRAK RAPORTU brutto</div>
<div style="position:absolute;left:472px;top:142px;width:606px;height:1px;background:#e6e6e6"></div>
<div style="position:absolute;left:472px;top:171px;width:606px;height:1px;background:#e6e6e6"></div>
<div style="position:absolute;left:472px;top:201px;width:606px;height:1px;background:#e6e6e6"></div>
<div style="position:absolute;left:472px;top:309px;width:606px;height:1px;background:#e6e6e6"></div>
<div style="position:absolute;left:472px;top:366px;width:606px;height:1px;background:#e6e6e6"></div>
<div style="position:absolute;left:472px;top:423px;width:606px;height:1px;background:#e6e6e6"></div>
<div style="position:absolute;left:801.8px;top:448px;width:108.7px;height:11px;overflow:hidden"><div style="position:absolute;left:2px;top:2px;font:bold 13px 'DejaVu Sans',sans-serif;line-height:16px;color:#000;white-space:pre">PŁATNOŚCI</div></div>
<div style="position:absolute;left:862px;top:458.5px;width:242px;height:18px;background:#fff"></div>
<div style="position:absolute;left:1104px;top:60px;width:16px;height:399px;background:#f1f1f1"></div>
<div style="position:absolute;left:1104px;top:95px;width:15px;height:268.5px;background:#c1c1c1"></div>
<svg style="left:1106px;top:79px;" width="11" height="7" viewBox="0 0 11 7"><path d="M1 6L5.500 1.500 10 6" fill="none" stroke="#505050" stroke-width="2.400"/></svg>
<svg style="left:1106px;top:434px;" width="11" height="7" viewBox="0 0 11 7"><path d="M1 1L5.500 5.500 10 1" fill="none" stroke="#505050" stroke-width="2.400"/></svg>
</div>
<div id="dialog">
<div style="position:absolute;left:0px;top:0px;width:814px;height:30px;background:#fff"></div>
<svg style="left:8px;top:6px;" width="17" height="16" viewBox="0 0 17 16"><path d="M4.500 3.500l8-1 1 1v10l-9 1z" fill="#d9d9d9" stroke="#a8a8a8" stroke-width=".6"/><path d="M6 6h6M6 8h6M6 10h6" stroke="#b9a9b2" stroke-width=".6"/><rect x="5.500" y="2" width="3" height="3" fill="#3a5ce0"/><path d="M6 2a1.300 1.300 0 0 1 2.500 0" fill="none" stroke="#8a9ad0" stroke-width=".8"/>
<path d="M.5 8.500c1-2.500 3.500-2.500 4.500 0l1.500 4-1 3-4.500-1.500z" fill="#dbb422"/><path d="M16.500 8.500c-1-2.500-3.500-2.500-4.500 0l-1.500 4 1 3 4.500-1.500z" fill="#dbb422"/><path d="M0 12.500l4.500 1.500-.5 2.500L0 15z" fill="#2e2a14"/><path d="M17 12.500l-4.500 1.500.5 2.500L17 15z" fill="#2e2a14"/></svg>
<div style="position:absolute;left:29.3px;top:6.85px;font:normal 12px 'Liberation Sans',sans-serif;line-height:16px;color:#999;white-space:pre;letter-spacing:-0.039px;">Lista dokumentów (0)</div>
<svg style="left:694px;top:9px;" width="104" height="11" viewBox="0 0 104 11"><g stroke="#6e6e6e" stroke-width="1" fill="none"><path d="M.5 5.500h11"/><path d="M46.500 .5h9v9h-9z"/><path d="M92 0l10 10M102 0L92 10"/></g></svg>
<div style="position:absolute;left:11.4px;top:34.85px;font:normal 12px 'Liberation Sans',sans-serif;line-height:16px;color:#000;white-space:pre;letter-spacing:0.118px;">Menu opcji dodatkowych</div>
<div style="position:absolute;left:8px;top:62px;width:201px;height:168px;background:#fff;border:1px solid #646464"></div>
<div style="position:absolute;left:41.5px;top:127.5px;width:153px;height:15px;background:#f0f0f0"></div>
<div style="position:absolute;left:27.0px;top:64.08px;font:normal 12.5px 'DejaVu Sans Condensed','DejaVu Sans',sans-serif;line-height:16px;color:#000;white-space:pre;transform:scaleX(0.9800);transform-origin:0 50%;">Listy dokumentów</div>
<div style="position:absolute;left:27.0px;top:80.08px;font:normal 12.5px 'DejaVu Sans Condensed','DejaVu Sans',sans-serif;line-height:16px;color:#000;white-space:pre;transform:scaleX(1.0067);transform-origin:0 50%;">Faktury JPK</div>
<div style="position:absolute;left:27.0px;top:96.08px;font:normal 12.5px 'DejaVu Sans Condensed','DejaVu Sans',sans-serif;line-height:16px;color:#000;white-space:pre;transform:scaleX(0.9226);transform-origin:0 50%;">Zamówienia</div>
<div style="position:absolute;left:43.0px;top:112.08px;font:normal 12.5px 'DejaVu Sans Condensed','DejaVu Sans',sans-serif;line-height:16px;color:#000;white-space:pre;transform:scaleX(0.9579);transform-origin:0 50%;">Zamówienia od klientów</div>
<div style="position:absolute;left:43.0px;top:128.08px;font:normal 12.5px 'DejaVu Sans Condensed','DejaVu Sans',sans-serif;line-height:16px;color:#000;white-space:pre;transform:scaleX(0.9618);transform-origin:0 50%;">Zamówienia dla dostawców</div>
<div style="position:absolute;left:43.0px;top:144.08px;font:normal 12.5px 'DejaVu Sans Condensed','DejaVu Sans',sans-serif;line-height:16px;color:#000;white-space:pre;transform:scaleX(0.9631);transform-origin:0 50%;">Zlecenia wewnętrzne</div>
<div style="position:absolute;left:43.0px;top:160.08px;font:normal 12.5px 'DejaVu Sans Condensed','DejaVu Sans',sans-serif;line-height:16px;color:#000;white-space:pre;transform:scaleX(0.9881);transform-origin:0 50%;">Oferty</div>
<div style="position:absolute;left:27.0px;top:176.08px;font:normal 12.5px 'DejaVu Sans Condensed','DejaVu Sans',sans-serif;line-height:16px;color:#000;white-space:pre;transform:scaleX(0.9537);transform-origin:0 50%;">Rejestry płatności</div>
<svg style="left:12px;top:65px;" width="32" height="126" viewBox="0 0 32 126"><g stroke="#8c8c8c" stroke-width="1" stroke-dasharray="1 1" fill="none"><path d="M5.500 11v107M10 6.500h4M6 22.500h8M10 38.500h4M10 118.500h4M21.500 45v58M22 54.500h8M22 70.500h8M22 86.500h8M22 102.500h8"/></g>
<g fill="#fff" stroke="#6e6e6e"><rect x="1.500" y="2.500" width="8" height="8"/><rect x="1.500" y="34.500" width="8" height="8"/><rect x="1.500" y="114.500" width="8" height="8"/></g>
<path d="M3 6.500h5M5.500 4v5M3 38.500h5M3 118.500h5M5.500 116v5" stroke="#000"/></svg>
<svg style="left:8px;top:239px;" width="13" height="13" viewBox="0 0 13 13"><rect x=".5" y=".5" width="12" height="12" fill="#fff" stroke="#333"/><path d="M2.300 6.300l3.200 3.500 6-7" fill="none" stroke="#222" stroke-width="1.300"/></svg>
<div style="position:absolute;left:24.4px;top:237.98px;font:normal 12.5px 'DejaVu Sans Condensed','DejaVu Sans',sans-serif;line-height:16px;color:#000;white-space:pre;transform:scaleX(0.9153);transform-origin:0 50%;">Wszystkie</div>
<svg style="left:8px;top:260px;" width="13" height="13" viewBox="0 0 13 13"><rect x=".5" y=".5" width="12" height="12" fill="#fff" stroke="#333"/><path d="M2.300 6.300l3.200 3.500 6-7" fill="none" stroke="#222" stroke-width="1.300"/></svg>
<div style="position:absolute;left:24.4px;top:258.98px;font:normal 12.5px 'DejaVu Sans Condensed','DejaVu Sans',sans-serif;line-height:16px;color:#000;white-space:pre;transform:scaleX(0.9641);transform-origin:0 50%;">Płatne przelewem</div>
<svg style="left:8px;top:280px;" width="13" height="13" viewBox="0 0 13 13"><rect x=".5" y=".5" width="12" height="12" fill="#fff" stroke="#333"/><path d="M2.300 6.300l3.200 3.500 6-7" fill="none" stroke="#222" stroke-width="1.300"/></svg>
<div style="position:absolute;left:24.4px;top:278.98px;font:normal 12.5px 'DejaVu Sans Condensed','DejaVu Sans',sans-serif;line-height:16px;color:#000;white-space:pre;transform:scaleX(1.0145);transform-origin:0 50%;">Gotówkowe</div>
<svg style="left:8px;top:300px;" width="13" height="13" viewBox="0 0 13 13"><rect x=".5" y=".5" width="12" height="12" fill="#fff" stroke="#333"/><path d="M2.300 6.300l3.200 3.500 6-7" fill="none" stroke="#222" stroke-width="1.300"/></svg>
<div style="position:absolute;left:24.4px;top:298.98px;font:normal 12.5px 'DejaVu Sans Condensed','DejaVu Sans',sans-serif;line-height:16px;color:#000;white-space:pre;transform:scaleX(0.9566);transform-origin:0 50%;">Inne spos. zapłaty</div>
<svg style="left:8px;top:320px;" width="13" height="13" viewBox="0 0 13 13"><rect x=".5" y=".5" width="12" height="12" fill="#fff" stroke="#333"/><path d="M2.300 6.300l3.200 3.500 6-7" fill="none" stroke="#222" stroke-width="1.300"/></svg>
<div style="position:absolute;left:24.4px;top:318.98px;font:normal 12.5px 'DejaVu Sans Condensed','DejaVu Sans',sans-serif;line-height:16px;color:#000;white-space:pre;transform:scaleX(0.9124);transform-origin:0 50%;">Rozliczone</div>
<svg style="left:8px;top:340px;" width="13" height="13" viewBox="0 0 13 13"><rect x=".5" y=".5" width="12" height="12" fill="#fff" stroke="#333"/><path d="M2.300 6.300l3.200 3.500 6-7" fill="none" stroke="#222" stroke-width="1.300"/></svg>
<div style="position:absolute;left:24.4px;top:338.98px;font:normal 12.5px 'DejaVu Sans Condensed','DejaVu Sans',sans-serif;line-height:16px;color:#000;white-space:pre;transform:scaleX(0.9097);transform-origin:0 50%;">Nierozliczone</div>
<svg style="left:8px;top:360px;" width="13" height="13" viewBox="0 0 13 13"><rect x=".5" y=".5" width="12" height="12" fill="#fff" stroke="#333"/><path d="M2.300 6.300l3.200 3.500 6-7" fill="none" stroke="#222" stroke-width="1.300"/></svg>
<div style="position:absolute;left:24.4px;top:358.98px;font:normal 12.5px 'DejaVu Sans Condensed','DejaVu Sans',sans-serif;line-height:16px;color:#000;white-space:pre;transform:scaleX(0.9603);transform-origin:0 50%;">Split Payment</div>
<div style="position:absolute;left:7.7px;top:383.00px;font:normal 13px 'Liberation Sans',sans-serif;line-height:16px;color:#000;white-space:pre;transform:scaleX(0.8411);transform-origin:0 50%;">Kontrahent</div>
<div style="position:absolute;left:7.7px;top:406.10px;font:normal 13px 'Liberation Sans',sans-serif;line-height:16px;color:#000;white-space:pre;transform:scaleX(0.7554);transform-origin:0 50%;">Pokaż</div>
<div style="position:absolute;left:63px;top:378px;width:139px;height:21px;background:#fff;border:1px solid #4a4a4a"></div><div style="position:absolute;left:71.7px;top:382.19px;font:normal 11px 'DejaVu Sans',sans-serif;line-height:16px;color:#000;white-space:pre;letter-spacing:-0.092px;">Nabywca</div><div style="position:absolute;left:182px;top:381px;width:16px;height:15px;background:linear-gradient(#f4f4f4,#cfcfcf);border:1px solid #333"></div><svg style="left:186px;top:386px;" width="8" height="5" viewBox="0 0 8 5"><path d="M0 0h8L4 4.500z" fill="#000"/></svg>
<div style="position:absolute;left:63px;top:405px;width:139px;height:21px;background:#fff;border:1px solid #4a4a4a"></div><div style="position:absolute;left:71.7px;top:408.59px;font:normal 11px 'DejaVu Sans',sans-serif;line-height:16px;color:#000;white-space:pre;letter-spacing:0.160px;">Bieżący miesiąc</div><div style="position:absolute;left:182px;top:408px;width:16px;height:15px;background:linear-gradient(#f4f4f4,#cfcfcf);border:1px solid #333"></div><svg style="left:186px;top:413px;" width="8" height="5" viewBox="0 0 8 5"><path d="M0 0h8L4 4.500z" fill="#000"/></svg>
<div style="position:absolute;left:9.0px;top:424.77px;font:normal 12.5px 'DejaVu Sans Condensed','DejaVu Sans',sans-serif;line-height:16px;color:#808080;white-space:pre;transform:scaleX(0.8750);transform-origin:0 50%;">Od</div>
<div style="position:absolute;left:121.0px;top:424.77px;font:normal 12.5px 'DejaVu Sans Condensed','DejaVu Sans',sans-serif;line-height:16px;color:#808080;white-space:pre;transform:scaleX(0.8748);transform-origin:0 50%;">Do</div>
<div style="position:absolute;left:8px;top:438.5px;width:79.5px;height:19px;background:#f0f0f0;border:1px solid #828282;border-right-color:#fff;border-bottom-color:#fff;box-shadow:inset 1px 1px 0 #9a9a9a"></div><div style="position:absolute;left:11.2px;top:441.67px;font:normal 12.5px 'DejaVu Sans Condensed','DejaVu Sans',sans-serif;line-height:16px;color:#7b7b7b;white-space:pre;transform:scaleX(0.8690);transform-origin:0 50%;">09-11-2022</div><div style="position:absolute;left:70px;top:440.5px;width:16px;height:15.5px;background:#ececec;border:1px solid #fff;border-right:2px solid #6d6d6d;border-bottom:2px solid #6d6d6d"></div><svg style="left:74px;top:446.5px;" width="8" height="5" viewBox="0 0 8 5"><path d="M0 0h8L4 4.500z" fill="#8c8c8c"/></svg>
<div style="position:absolute;left:120px;top:438.5px;width:79.5px;height:19px;background:#f0f0f0;border:1px solid #828282;border-right-color:#fff;border-bottom-color:#fff;box-shadow:inset 1px 1px 0 #9a9a9a"></div><div style="position:absolute;left:123.2px;top:441.67px;font:normal 12.5px 'DejaVu Sans Condensed','DejaVu Sans',sans-serif;line-height:16px;color:#7b7b7b;white-space:pre;transform:scaleX(0.8690);transform-origin:0 50%;">09-11-2022</div><div style="position:absolute;left:182px;top:440.5px;width:16px;height:15.5px;background:#ececec;border:1px solid #fff;border-right:2px solid #6d6d6d;border-bottom:2px solid #6d6d6d"></div><svg style="left:186px;top:446.5px;" width="8" height="5" viewBox="0 0 8 5"><path d="M0 0h8L4 4.500z" fill="#8c8c8c"/></svg>
<svg style="left:8px;top:473px;" width="13" height="13" viewBox="0 0 13 13"><rect x=".5" y=".5" width="12" height="12" fill="#fff" stroke="#333"/></svg>
<div style="position:absolute;left:23.9px;top:472.42px;font:normal 11.5px 'DejaVu Sans Condensed','DejaVu Sans',sans-serif;line-height:16px;color:#000;white-space:pre;transform:scaleX(0.9192);transform-origin:0 50%;">Pokaż to okno przy starcie programu</div>
<div style="position:absolute;left:216.2px;top:61.44px;font:normal 23px 'DejaVu Sans Condensed','DejaVu Sans',sans-serif;line-height:16px;color:#000;white-space:pre;transform:scaleX(0.9595);transform-origin:0 50%;">Zamówienia dla dostawców</div>
<div style="position:absolute;left:216px;top:86px;width:597px;height:2px;background:#bababa;border-bottom:1px solid #fafafa"></div>
<div style="position:absolute;left:216px;top:94px;width:586px;height:344px;background:#fff"></div>
<div style="position:absolute;left:291.0px;top:116px;width:1px;height:321px;background:#ededed"></div>
<div style="position:absolute;left:367.0px;top:116px;width:1px;height:321px;background:#ededed"></div>
<div style="position:absolute;left:496.0px;top:116px;width:1px;height:321px;background:#ededed"></div>
<div style="position:absolute;left:572.0px;top:116px;width:1px;height:321px;background:#ededed"></div>
<div style="position:absolute;left:648.0px;top:116px;width:1px;height:321px;background:#ededed"></div>
<div style="position:absolute;left:724.0px;top:116px;width:1px;height:321px;background:#ededed"></div>
<div style="position:absolute;left:216px;top:94px;width:74.0px;height:22px;background:linear-gradient(#eeeeee,#e0e0e0 40%,#bcbcbc);border-right:1px solid #8e8e8e;border-bottom:1px solid #a8a8a8"></div>
<div style="position:absolute;left:220.5px;top:98.00px;font:normal 13px 'Liberation Sans',sans-serif;line-height:16px;color:#000;white-space:pre;transform:scaleX(0.8214);transform-origin:0 50%;">Data wystawi</div>
<div style="position:absolute;left:291.5px;top:94px;width:74.5px;height:22px;background:linear-gradient(#eeeeee,#e0e0e0 40%,#bcbcbc);border-right:1px solid #8e8e8e;border-bottom:1px solid #a8a8a8"></div>
<div style="position:absolute;left:296.6px;top:98.00px;font:normal 13px 'Liberation Sans',sans-serif;line-height:16px;color:#000;white-space:pre;transform:scaleX(0.7792);transform-origin:0 50%;">Numer</div>
<div style="position:absolute;left:367.5px;top:94px;width:127.5px;height:22px;background:linear-gradient(#eeeeee,#e0e0e0 40%,#bcbcbc);border-right:1px solid #8e8e8e;border-bottom:1px solid #a8a8a8"></div>
<div style="position:absolute;left:372.3px;top:98.00px;font:normal 13px 'Liberation Sans',sans-serif;line-height:16px;color:#000;white-space:pre;transform:scaleX(0.8128);transform-origin:0 50%;">Kontrahent</div>
<div style="position:absolute;left:496.5px;top:94px;width:74.5px;height:22px;background:linear-gradient(#eeeeee,#e0e0e0 40%,#bcbcbc);border-right:1px solid #8e8e8e;border-bottom:1px solid #a8a8a8"></div>
<div style="position:absolute;left:501.2px;top:98.00px;font:normal 13px 'Liberation Sans',sans-serif;line-height:16px;color:#000;white-space:pre;transform:scaleX(0.8432);transform-origin:0 50%;">Wartość</div>
<div style="position:absolute;left:572.5px;top:94px;width:74.5px;height:22px;background:linear-gradient(#eeeeee,#e0e0e0 40%,#bcbcbc);border-right:1px solid #8e8e8e;border-bottom:1px solid #a8a8a8"></div>
<div style="position:absolute;left:577.6px;top:98.00px;font:normal 13px 'Liberation Sans',sans-serif;line-height:16px;color:#000;white-space:pre;transform:scaleX(0.8007);transform-origin:0 50%;">Termin realiz</div>
<div style="position:absolute;left:648.5px;top:94px;width:74.5px;height:22px;background:linear-gradient(#eeeeee,#e0e0e0 40%,#bcbcbc);border-right:1px solid #8e8e8e;border-bottom:1px solid #a8a8a8"></div>
<div style="position:absolute;left:653.2px;top:98.00px;font:normal 13px 'Liberation Sans',sans-serif;line-height:16px;color:#000;white-space:pre;transform:scaleX(0.8482);transform-origin:0 50%;">Do zapłaty</div>
<div style="position:absolute;left:724.5px;top:94px;width:74.5px;height:22px;background:linear-gradient(#eeeeee,#e0e0e0 40%,#bcbcbc);border-right:1px solid #8e8e8e;border-bottom:1px solid #a8a8a8"></div>
<div style="position:absolute;left:729.7px;top:98.00px;font:normal 13px 'Liberation Sans',sans-serif;line-height:16px;color:#000;white-space:pre;transform:scaleX(0.8334);transform-origin:0 50%;">Nazwa dok</div>
<div style="position:absolute;left:801px;top:94px;width:1.5px;height:344px;background:#f0f0f0"></div>
<div style="position:absolute;left:216px;top:437px;width:586px;height:17px;background:#fff;border-top:1px solid #7a7a7a;border-bottom:1px solid #8a8a8a"></div>
<div style="position:absolute;left:216px;top:438px;width:16.5px;height:15px;background:#f0f0f0;border-right:1px solid #777;border-bottom:1px solid #777"></div>
<svg style="left:221px;top:441px;" width="5" height="9" viewBox="0 0 5 9"><path d="M5 0v9L0 4.500z" fill="#000"/></svg>
<div style="position:absolute;left:232.5px;top:438px;width:70px;height:15px;background:#f0f0f0;border-right:2px solid #696969;border-bottom:1px solid #777"></div>
<div style="position:absolute;left:786px;top:438px;width:16.5px;height:15px;background:#f0f0f0;border-right:1px solid #777;border-bottom:1px solid #777;border-left:1px solid #ddd"></div>
<svg style="left:792px;top:441px;" width="5" height="9" viewBox="0 0 5 9"><path d="M0 0v9l5-4.500z" fill="#000"/></svg>
<div style="position:absolute;left:216px;top:472px;width:97px;height:25px;background:#efefef;border:1px solid #cacaca"></div>
<div style="position:absolute;left:328px;top:472px;width:89px;height:25px;background:#efefef;border:1px solid #cacaca"></div>
<div style="position:absolute;left:424px;top:472px;width:97px;height:25px;background:#efefef;border:1px solid #cacaca"></div>
<div style="position:absolute;left:528px;top:472px;width:25px;height:25px;background:#ededed;border:1px solid #c6c6c6"></div>
<div style="position:absolute;left:560px;top:472px;width:25px;height:25px;background:#ededed;border:1px solid #c6c6c6"></div>
<div style="position:absolute;left:632px;top:472px;width:65px;height:25px;background:#ececec;border:1px solid #c4c4c4"></div>
<div style="position:absolute;left:706px;top:472px;width:97px;height:25px;background:#efefef;border:1px solid #0078d7;box-shadow:inset 0 0 0 1px #d5e6f3"></div>
<div style="position:absolute;left:253.6px;top:476.80px;font:normal 13px 'DejaVu Sans Condensed','DejaVu Sans',sans-serif;line-height:16px;color:#9c9c9c;white-space:pre;transform:scaleX(0.9317);transform-origin:0 50%;">Popraw</div>
<div style="position:absolute;left:355.1px;top:476.80px;font:normal 13px 'DejaVu Sans Condensed','DejaVu Sans',sans-serif;line-height:16px;color:#9c9c9c;white-space:pre;transform:scaleX(0.8545);transform-origin:0 50%;"><u>R</u>ozlicz</div>
<div style="position:absolute;left:464.6px;top:476.80px;font:normal 13px 'DejaVu Sans Condensed','DejaVu Sans',sans-serif;line-height:16px;color:#9c9c9c;white-space:pre;transform:scaleX(0.8781);transform-origin:0 50%;">D<u>r</u>ukuj</div>
<div style="position:absolute;left:660.0px;top:476.80px;font:normal 13px 'DejaVu Sans Condensed','DejaVu Sans',sans-serif;line-height:16px;color:#000;white-space:pre;transform:scaleX(0.8847);transform-origin:0 50%;"><u>U</u>suń</div>
<div style="position:absolute;left:746.4px;top:476.80px;font:normal 13px 'DejaVu Sans Condensed','DejaVu Sans',sans-serif;line-height:16px;color:#000;white-space:pre;transform:scaleX(0.9244);transform-origin:0 50%;"><u>O</u>K</div>
<svg style="left:233.5px;top:476px;" width="17" height="17" viewBox="0 0 17 17"><path d="M.5 1.500H9L5.500 8.500 12.500 0l3.500 1.500L11.500 9v7.500H.5z" fill="#9d9d9d"/><path d="M.5 1.500H9L5 9l-.8 2.500L.5 11z" fill="#ececec" opacity=".55"/></svg>
<svg style="left:445px;top:475.5px;" width="16" height="16" viewBox="0 0 16 16"><path d="M5 0h6v5H5z" fill="#9a9a9a"/><rect x="0" y="4" width="16" height="8" fill="#9a9a9a"/><path d="M4 10h8v6H4z" fill="#a6a6a6"/></svg>
<svg style="left:532px;top:477px;" width="16" height="15" viewBox="0 0 16 15"><path d="M4 0h3v3H4zM9 0h3v3H9z" fill="#000"/><path d="M3 3h4l.5 4h1L9 3h4l3 9v3h-5.500v-5h-5v5H0v-3z" fill="#000"/><path d="M4.500 4.500l-2 7M11.500 4.500l2 7" stroke="#fff" stroke-width=".9"/></svg>
<svg style="left:565px;top:479px;" width="15" height="11" viewBox="0 0 15 11"><rect x=".5" y=".5" width="14" height="10" fill="#f4f6f8" stroke="#333" stroke-width=".9"/><path d="M.5 .5l7 6 7-6M.5 10.500l5-5M14.500 10.500l-5-5" fill="none" stroke="#333" stroke-width=".8"/></svg>
<svg style="left:641px;top:476px;" width="17" height="16" viewBox="0 0 17 16"><path d="M.5 .5h8l3 3v12h-11z" fill="#fafafa" stroke="#8a8a8a"/><path d="M2.500 4h5M2.500 6.500h6M2.500 9h3M2.500 11.500h3" stroke="#9a9a9a" stroke-width=".9" stroke-dasharray="1.500 .7"/><rect x="6" y="9.500" width="10.500" height="3.500" fill="#e8402a" stroke="#b82010" stroke-width=".6"/></svg>
</div>
</body>
</html>
